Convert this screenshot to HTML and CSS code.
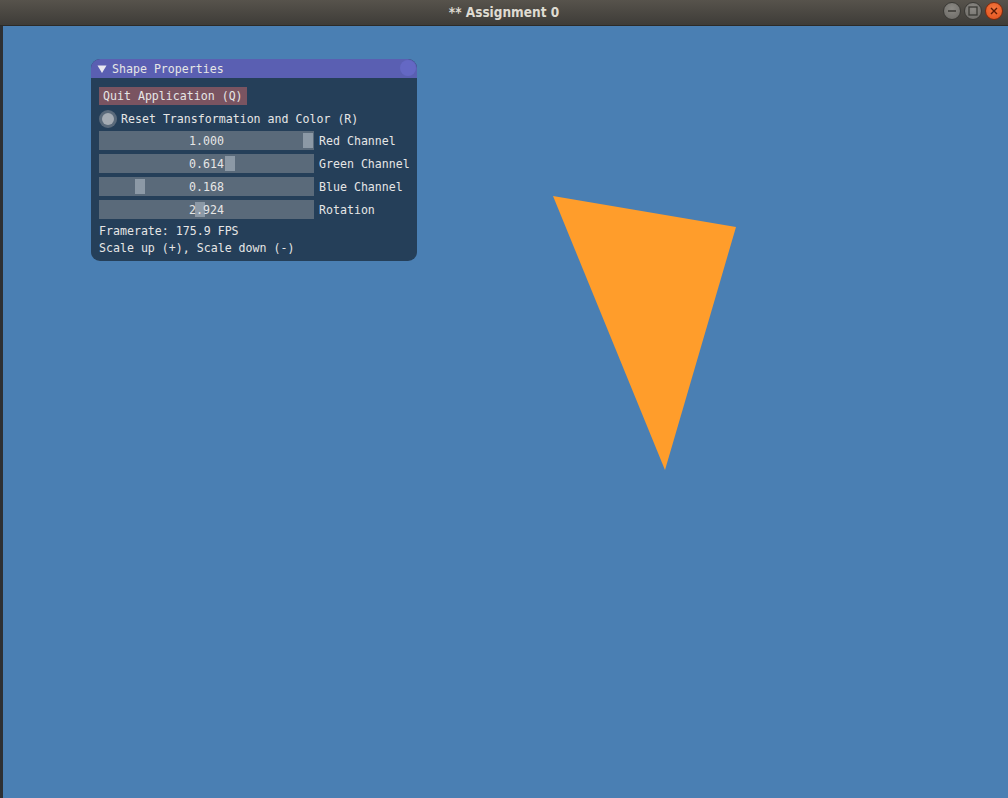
FILE: index.html
```html
<!DOCTYPE html>
<html>
<head>
<meta charset="utf-8">
<link rel="stylesheet" href="styles.css">
</head>
<body>
<div class="app">
  <header class="titlebar">
    <span class="wintitle">** Assignment 0</span>
    <div class="winbtns">
      <span class="wbtn"><svg width="18" height="18" viewBox="0 0 18 18"><line x1="5" y1="9" x2="13" y2="9" stroke="#3a3935" stroke-width="1.5"/></svg></span>
      <span class="wbtn"><svg width="18" height="18" viewBox="0 0 18 18"><rect x="5" y="5" width="8" height="8" fill="none" stroke="#3a3935" stroke-width="1.3"/></svg></span>
      <span class="wbtn close"><svg width="18" height="18" viewBox="0 0 18 18"><path d="M6 6 L12 12 M12 6 L6 12" stroke="#5a1a05" stroke-width="1.4"/></svg></span>
    </div>
  </header>
  <div class="main">
    <div class="leftstrip"></div>
    <div class="canvas">
      <svg class="scene" width="1005" height="772" viewBox="0 0 1005 772">
        <polygon points="550,170 733,201 662,444" fill="#ff9d2b"/>
      </svg>
      <section class="panel">
        <div class="ptitle">
          <svg class="caret" width="10" height="10" viewBox="0 0 10 10"><polygon points="0.5,1.5 9.5,1.5 5,9" fill="#e8e8f0"/></svg>
          <span>Shape Properties</span>
          <span class="pclose"></span>
        </div>
        <div class="pbody">
          <div class="row"><button class="btn">Quit Application (Q)</button></div>
          <div class="row radio-row"><span class="radio"><span class="dot"></span></span><span>Reset Transformation and Color (R)</span></div>
          <div class="row"><div class="slider"><span class="grab" style="left:204px"></span><span class="val">1.000</span></div><span class="lbl">Red Channel</span></div>
          <div class="row"><div class="slider"><span class="grab" style="left:126px"></span><span class="val">0.614</span></div><span class="lbl">Green Channel</span></div>
          <div class="row"><div class="slider"><span class="grab" style="left:36px"></span><span class="val">0.168</span></div><span class="lbl">Blue Channel</span></div>
          <div class="row"><div class="slider"><span class="grab" style="left:96px"></span><span class="val">2.924</span></div><span class="lbl">Rotation</span></div>
          <div class="text first">Framerate: 175.9 FPS</div>
          <div class="text">Scale up (+), Scale down (-)</div>
        </div>
      </section>
    </div>
  </div>
</div>
</body>
</html>
```

FILE: styles.css
```css
* { box-sizing: border-box; }
html, body { margin: 0; padding: 0; }
body { width: 1008px; height: 798px; overflow: hidden; background: #2b2b2b; }
.app { display: flex; flex-direction: column; width: 1008px; height: 798px; }

.titlebar {
  height: 26px;
  flex: none;
  display: flex;
  align-items: center;
  justify-content: center;
  position: relative;
  background: linear-gradient(#57534c, #3e3c38);
  border-bottom: 1px solid #2c2b28;
}
.wintitle {
  font-family: "DejaVu Sans Condensed", "DejaVu Sans", sans-serif;
  font-weight: bold;
  font-size: 13.5px;
  color: #dfdbd2;
  margin-top: -2px;
}
.winbtns {
  position: absolute;
  right: 5px;
  top: 2px;
  display: flex;
  gap: 3px;
}
.wbtn {
  width: 18px; height: 18px;
  border-radius: 50%;
  background: radial-gradient(circle at 50% 35%, #8c8a85, #6a6864);
  border: 1px solid #3a3935;
  display: flex;
  align-items: center;
  justify-content: center;
}
.wbtn svg { display: block; margin: -1px; }
.wbtn.close { background: radial-gradient(circle at 50% 35%, #f3773f, #e2501b); border-color: #7a2c10; }

.main { flex: 1; display: flex; }
.leftstrip { width: 3px; background: #2e3033; }
.canvas { flex: 1; position: relative; background: #4a7fb3; }
.scene { position: absolute; left: 0; top: 0; }

.panel {
  position: absolute;
  left: 88px;
  top: 33px;
  width: 326px;
  height: 202px;
  border-radius: 9px;
  overflow: hidden;
  background: #253f59;
  font-family: "DejaVu Sans Mono", "Liberation Mono", monospace;
  font-size: 11.6px;
  color: #e6e6e6;
  display: flex;
  flex-direction: column;
  white-space: nowrap;
}
.ptitle {
  height: 19px;
  flex: none;
  background: #5a5fb2;
  display: flex;
  align-items: center;
  padding-left: 6px;
  position: relative;
}
.caret { margin-right: 5px; }
.pclose {
  position: absolute;
  right: 1px;
  top: 1px;
  width: 16px; height: 16px;
  border-radius: 50%;
  background: #6468c4;
}
.pbody {
  flex: 1;
  padding: 9px 8px 8px 8px;
  display: flex;
  flex-direction: column;
  gap: 4px;
}
.row { display: flex; align-items: center; height: 18px; flex: none; }
.row:nth-child(n+3) { height: 19px; }
.btn {
  font: inherit;
  color: #e6e6e6;
  background: #7a5461;
  border: none;
  height: 18px;
  padding: 0 4px;
  margin: 0;
  line-height: 18px;
}
.radio-row { gap: 4px; margin-top: 1px; margin-bottom: -1px; }
.radio {
  width: 18px; height: 18px;
  border-radius: 50%;
  background: #5a6a7b;
  display: flex;
  align-items: center;
  justify-content: center;
}
.dot { width: 12px; height: 12px; border-radius: 50%; background: #a4abb3; }
.slider {
  width: 215px;
  flex: none;
  height: 19px;
  background: #5a6a7a;
  position: relative;
  display: flex;
  align-items: center;
  justify-content: center;
}
.grab {
  position: absolute;
  top: 2px;
  width: 10px;
  height: 15px;
  background: #8c99a6;
}
.val { position: relative; }
.lbl { margin-left: 5px; }
.text { height: 13px; line-height: 13px; }
.text.first { margin-top: 2px; }
```
